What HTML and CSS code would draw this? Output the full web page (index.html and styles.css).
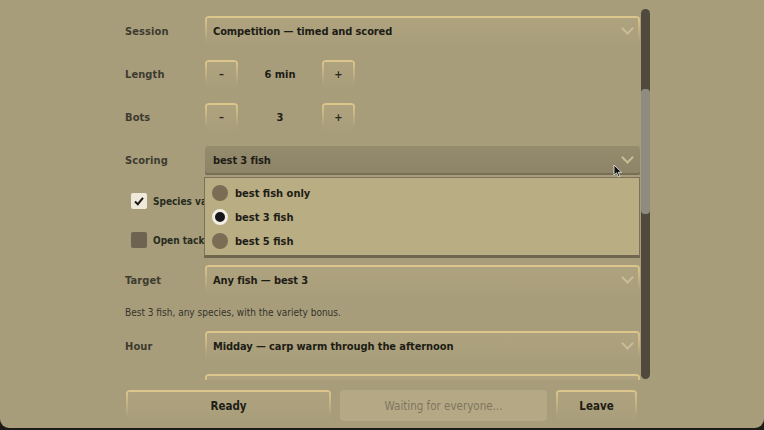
FILE: index.html
```html
<!DOCTYPE html>
<html>
<head>
<meta charset="utf-8">
<link rel="stylesheet" href="styles.css">
</head>
<body>
<div class="panel">
  <div class="scroll-area">
    <div class="content">
      <div class="row row-session">
        <div class="label">Session</div>
        <div class="select"><span class="value">Competition — timed and scored</span><span class="chev"></span></div>
      </div>
      <div class="row row-length">
        <div class="label">Length</div>
        <div class="stepper">
          <div class="step-btn">–</div>
          <div class="step-val">6 min</div>
          <div class="step-btn">+</div>
        </div>
      </div>
      <div class="row row-bots">
        <div class="label">Bots</div>
        <div class="stepper">
          <div class="step-btn">–</div>
          <div class="step-val">3</div>
          <div class="step-btn">+</div>
        </div>
      </div>
      <div class="row row-scoring">
        <div class="label">Scoring</div>
        <div class="select select-open"><span class="value">best 3 fish</span><span class="chev"></span>
          <div class="menu">
            <div class="opt"><span class="radio"></span>best fish only</div>
            <div class="opt"><span class="radio radio-on"></span>best 3 fish</div>
            <div class="opt"><span class="radio"></span>best 5 fish</div>
          </div>
          <svg class="cursor" width="10" height="14" viewBox="0 0 10 14"><path d="M1 1 L1 11 L3.5 8.8 L5.5 13 L7 12.3 L5.2 8.3 L8.5 8.3 Z" fill="#111" stroke="#eee" stroke-width="0.8"/></svg>
        </div>
      </div>
      <div class="row row-check1">
        <div class="check check-on"><svg width="12" height="12" viewBox="0 0 12 12"><path d="M2 6.5 L4.8 9.2 L10 2.8" fill="none" stroke="#1b1b14" stroke-width="2"/></svg></div>
        <div class="check-label">Species variety bonus</div>
      </div>
      <div class="row row-check2">
        <div class="check"></div>
        <div class="check-label">Open tackle — any bait</div>
      </div>
      <div class="row row-target">
        <div class="label">Target</div>
        <div class="select"><span class="value">Any fish — best 3</span><span class="chev"></span></div>
      </div>
      <div class="desc">Best 3 fish, any species, with the variety bonus.</div>
      <div class="row row-hour">
        <div class="label">Hour</div>
        <div class="select"><span class="value">Midday — carp warm through the afternoon</span><span class="chev"></span></div>
      </div>
      <div class="row row-next">
        <div class="label">Weather</div>
        <div class="select"><span class="value">Overcast</span><span class="chev"></span></div>
      </div>
    </div>
    <div class="scrollbar"><div class="thumb"></div></div>
  </div>
  <div class="footer">
    <div class="btn btn-ready">Ready</div>
    <div class="btn btn-wait">Waiting for everyone...</div>
    <div class="btn btn-leave">Leave</div>
  </div>
</div>
</body>
</html>
```

FILE: styles.css
```css
html, body {
  margin: 0;
  padding: 0;
  background: #1c1b17;
}
body {
  width: 764px;
  height: 430px;
  overflow: hidden;
  font-family: "DejaVu Sans Condensed", "Liberation Sans", sans-serif;
}
.panel {
  width: 764px;
  height: 428px;
  background: #a89d7b;
  border-radius: 0 0 9px 9px;
  display: flex;
  flex-direction: column;
}
.scroll-area {
  display: flex;
  margin-top: 9px;
  height: 371px;
}
.content {
  width: 516px;
  margin-left: 125px;
  position: relative;
  clip-path: inset(-5px -5px 0 -5px);
  display: flex;
  flex-direction: column;
}
.row {
  display: flex;
  align-items: center;
  flex-shrink: 0;
}
.label {
  width: 80px;
  font-size: 11px;
  font-weight: bold;
  color: #3d3b2f;
  letter-spacing: 0.1px;
}
.select {
  position: relative;
  width: 435px;
  height: 30px;
  box-sizing: border-box;
  border-radius: 4px 4px 2px 2px;
  background:
    linear-gradient(to bottom, #dcc68b, rgba(220,198,139,0) 85%) left top / 2px 100% no-repeat,
    linear-gradient(to bottom, #dcc68b, rgba(220,198,139,0) 85%) right top / 2px 100% no-repeat,
    linear-gradient(to bottom, #afa37f, #a99e7b);
  box-shadow: inset 0 2px 0 #dcc68b;
  display: flex;
  align-items: center;
  padding-left: 8px;
}
.value {
  font-size: 11px;
  font-weight: bold;
  color: #1d1c15;
  letter-spacing: -0.1px;
}
.chev {
  position: absolute;
  right: 8px;
  top: 8px;
  width: 7px;
  height: 7px;
  border-right: 2px solid #c9bd97;
  border-bottom: 2px solid #c9bd97;
  transform: rotate(45deg);
}
.row-session { margin-top: 7px; }
.row-length { margin-top: 14px; }
.row-bots { margin-top: 15px; }
.row-scoring { margin-top: 14px; position: relative; z-index: 5; }
.row-check1 { margin-top: 18px; }
.row-check2 { margin-top: 23px; }
.row-target { margin-top: 17px; }
.desc {
  margin-top: 11px;
  height: 14px;
  line-height: 14px;
  font-size: 10px;
  color: #34332a;
  flex-shrink: 0;
}
.row-hour { margin-top: 11px; }
.row-next { margin-top: 13px; }
.stepper {
  display: flex;
  align-items: center;
}
.step-btn {
  width: 33px;
  height: 28px;
  box-sizing: border-box;
  border-radius: 4px 4px 2px 2px;
  background:
    linear-gradient(to bottom, #dcc68b, rgba(220,198,139,0) 85%) left top / 2px 100% no-repeat,
    linear-gradient(to bottom, #dcc68b, rgba(220,198,139,0) 85%) right top / 2px 100% no-repeat,
    linear-gradient(to bottom, #afa37f, #a99e7b);
  box-shadow: inset 0 2px 0 #dcc68b;
  display: flex;
  align-items: center;
  justify-content: center;
  font-size: 11px;
  font-weight: bold;
  color: #2a2920;
}
.step-val {
  width: 84px;
  text-align: center;
  font-size: 11px;
  font-weight: bold;
  color: #1d1c15;
}
.select-open {
  background: linear-gradient(to bottom, #958b6d, #8d8368);
  box-shadow: inset 0 1px 0 #a99e7c, inset 0 -2px 0 #776e56;
}
.menu {
  position: absolute;
  left: -1px;
  top: 32px;
  width: 436px;
  height: 81px;
  box-sizing: border-box;
  background: #b9ad84;
  border: 1px solid #7b7158;
  border-bottom: 3px solid #6f6650;
  padding-top: 3px;
}
.opt {
  height: 24px;
  display: flex;
  align-items: center;
  padding-left: 7px;
  font-size: 11px;
  font-weight: bold;
  color: #1d1c15;
}
.radio {
  width: 16px;
  height: 16px;
  border-radius: 50%;
  background: #7b6d53;
  margin-right: 7px;
  box-sizing: border-box;
}
.radio-on {
  background: #16161a;
  border: 3px solid #f1ede2;
}
.cursor {
  position: absolute;
  left: 408px;
  top: 19px;
}
.check {
  width: 16px;
  height: 16px;
  margin-left: 6px;
  border-radius: 2px;
  background: #6d6350;
  display: flex;
  align-items: center;
  justify-content: center;
  flex-shrink: 0;
}
.check-on {
  background: #efe9da;
}
.check-label {
  margin-left: 6px;
  width: 51px;
  overflow: hidden;
  white-space: nowrap;
  font-size: 10px;
  font-weight: bold;
  color: #262c1e;
}
.scrollbar {
  width: 9px;
  height: 370px;
  background: #4f4a3c;
  border-radius: 5px;
  position: relative;
}
.thumb {
  position: absolute;
  left: 0;
  top: 80px;
  width: 9px;
  height: 125px;
  background: #8f8b7f;
  border-radius: 4px;
}
.footer {
  display: flex;
  margin-top: 10px;
  margin-left: 126px;
  gap: 9px;
}
.btn {
  height: 31px;
  box-sizing: border-box;
  border-radius: 4px 4px 2px 2px;
  display: flex;
  align-items: center;
  justify-content: center;
  font-size: 11.5px;
  font-weight: bold;
  color: #1d1c15;
  background:
    linear-gradient(to bottom, #dcc68b, rgba(220,198,139,0) 85%) left top / 2px 100% no-repeat,
    linear-gradient(to bottom, #dcc68b, rgba(220,198,139,0) 85%) right top / 2px 100% no-repeat,
    linear-gradient(to bottom, #afa37f, #a99e7b);
  box-shadow: inset 0 2px 0 #dcc68b;
}
.btn-ready { width: 205px; }
.btn-wait {
  width: 207px;
  background: #b5a985;
  box-shadow: none;
  border-radius: 4px;
  color: #7d7560;
  font-weight: normal;
}
.btn-leave { width: 81px; }
```
